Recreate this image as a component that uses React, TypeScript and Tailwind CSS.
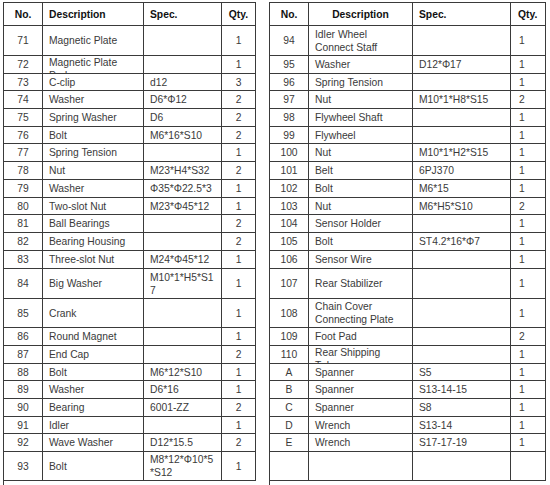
import React from "react";

type Cell = { lines: string[]; clip?: boolean };
type Row = [string, Cell | string, Cell | string, string];

const H = [30, 18, 17, 18, 18, 17, 18, 18, 18, 17, 18, 18, 18, 30, 29, 18, 18, 17, 18, 18, 17, 18, 29];
const HEIGHT_CLASSES: Record<number, string> = {
  17: "h-[17px]",
  18: "h-[18px]",
  29: "h-[29px]",
  30: "h-[30px]",
};

const left: Row[] = [
  ["71", "Magnetic Plate", "", "1"],
  ["72", { lines: ["Magnetic Plate", "Pad"], clip: true }, "", "1"],
  ["73", "C-clip", "d12", "3"],
  ["74", "Washer", "D6*Φ12", "2"],
  ["75", "Spring Washer", "D6", "2"],
  ["76", "Bolt", "M6*16*S10", "2"],
  ["77", "Spring Tension", "", "1"],
  ["78", "Nut", "M23*H4*S32", "2"],
  ["79", "Washer", "Φ35*Φ22.5*3", "1"],
  ["80", "Two-slot Nut", "M23*Φ45*12", "1"],
  ["81", "Ball Bearings", "", "2"],
  ["82", "Bearing Housing", "", "2"],
  ["83", "Three-slot Nut", "M24*Φ45*12", "1"],
  ["84", "Big Washer", { lines: ["M10*1*H5*S1", "7"] }, "1"],
  ["85", "Crank", "", "1"],
  ["86", "Round Magnet", "", "1"],
  ["87", "End Cap", "", "2"],
  ["88", "Bolt", "M6*12*S10", "1"],
  ["89", "Washer", "D6*16", "1"],
  ["90", "Bearing", "6001-ZZ", "2"],
  ["91", "Idler", "", "1"],
  ["92", "Wave Washer", "D12*15.5", "2"],
  ["93", "Bolt", { lines: ["M8*12*Φ10*5", "*S12"] }, "1"],
];

const right: Row[] = [
  ["94", { lines: ["Idler Wheel", "Connect Staff"] }, "", "1"],
  ["95", "Washer", "D12*Φ17", "1"],
  ["96", "Spring Tension", "", "1"],
  ["97", "Nut", "M10*1*H8*S15", "2"],
  ["98", "Flywheel Shaft", "", "1"],
  ["99", "Flywheel", "", "1"],
  ["100", "Nut", "M10*1*H2*S15", "1"],
  ["101", "Belt", "6PJ370", "1"],
  ["102", "Bolt", "M6*15", "1"],
  ["103", "Nut", "M6*H5*S10", "2"],
  ["104", "Sensor Holder", "", "1"],
  ["105", "Bolt", "ST4.2*16*Φ7", "1"],
  ["106", "Sensor Wire", "", "1"],
  ["107", "Rear Stabilizer", "", "1"],
  ["108", { lines: ["Chain Cover", "Connecting Plate"] }, "", "1"],
  ["109", "Foot Pad", "", "2"],
  ["110", { lines: ["Rear Shipping", "Tube"], clip: true }, "", "1"],
  ["A", "Spanner", "S5", "1"],
  ["B", "Spanner", "S13-14-15", "1"],
  ["C", "Spanner", "S8", "1"],
  ["D", "Wrench", "S13-14", "1"],
  ["E", "Wrench", "S17-17-19", "1"],
  ["", "", "", ""],
];

function Content({ c }: { c: Cell | string }) {
  if (typeof c === "string") return <span className="whitespace-nowrap">{c}</span>;
  return (
    <span className="flex flex-col whitespace-nowrap">
      {c.lines.map((l, i) => (
        <span key={i}>{l}</span>
      ))}
    </span>
  );
}

function isClip(c: Cell | string) {
  return typeof c !== "string" && !!c.clip;
}

type Widths = { w: string[]; descCenter: boolean; qtyLeft: boolean };

function Table({ rows, cfg }: { rows: Row[]; cfg: Widths }) {
  const [w0, w1, w2, w3] = cfg.w;
  return (
    <div className="flex flex-col border-l border-t border-[#3a3a3a]">
      <div className="flex h-[23px] border-b border-[#3a3a3a] font-bold text-[#111]">
        <div className={`${w0} flex items-center justify-center border-r border-[#3a3a3a]`}>No.</div>
        <div
          className={`${w1} flex items-center border-r border-[#3a3a3a] ${
            cfg.descCenter ? "justify-center" : "pl-[6px]"
          }`}
        >
          Description
        </div>
        <div className={`${w2} flex items-center border-r border-[#3a3a3a] pl-[6px]`}>Spec.</div>
        <div
          className={`${w3} flex items-center border-r border-[#3a3a3a] ${
            cfg.qtyLeft ? "pl-[7px]" : "justify-center"
          }`}
        >
          Qty.
        </div>
      </div>
      {rows.map((r, i) => {
        const h = HEIGHT_CLASSES[H[i]];
        return (
          <div key={i} className={`flex ${h} border-b border-[#3a3a3a] text-[#3a3a3a]`}>
            <div className={`${w0} flex items-center justify-center border-r border-[#3a3a3a]`}>{r[0]}</div>
            <div
              className={`${w1} flex overflow-hidden border-r border-[#3a3a3a] pl-[6px] ${
                isClip(r[1]) ? "items-start" : "items-center"
              }`}
            >
              <Content c={r[1]} />
            </div>
            <div className={`${w2} flex items-center overflow-hidden border-r border-[#3a3a3a] pl-[6px]`}>
              <Content c={r[2]} />
            </div>
            <div
              className={`${w3} flex items-center border-r border-[#3a3a3a] ${
                cfg.qtyLeft ? "pl-[8px]" : "justify-center"
              }`}
            >
              {r[3]}
            </div>
          </div>
        );
      })}
    </div>
  );
}

export default function App() {
  return (
    <div
      className="flex h-[485px] w-[550px] gap-[13px] bg-white pl-[3px] pt-[2px] text-[10.3px] leading-[13px]"
      style={{ fontFamily: '"Liberation Sans", Arial, sans-serif' }}
    >
      <Table
        rows={left}
        cfg={{
          w: ["w-[39px]", "w-[101px]", "w-[78px]", "w-[34px]"],
          descCenter: false,
          qtyLeft: false,
        }}
      />
      <Table
        rows={right}
        cfg={{
          w: ["w-[39px]", "w-[104px]", "w-[98px]", "w-[35px]"],
          descCenter: true,
          qtyLeft: true,
        }}
      />
    </div>
  );
}
